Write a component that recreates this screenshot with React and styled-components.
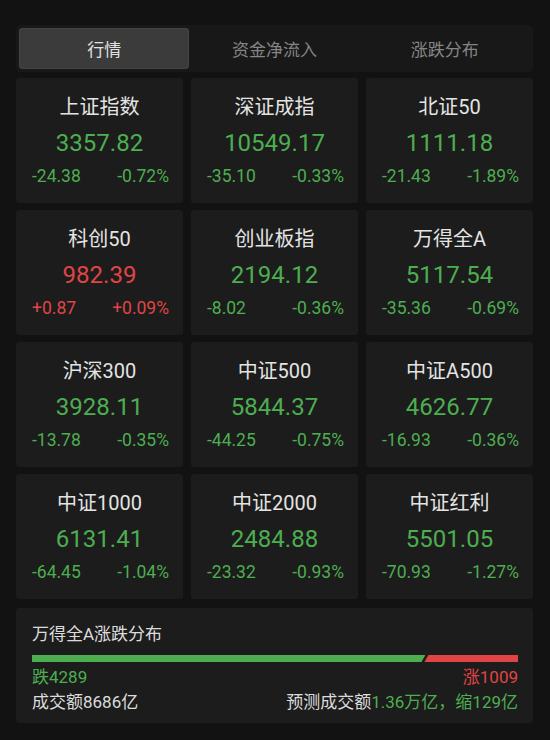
import React from 'react';
import styled, { createGlobalStyle } from 'styled-components';

const GREEN = '#4cae50';
const RED = '#e04545';

const GlobalStyle = createGlobalStyle`
    html, body {
        margin: 0;
        padding: 0;
        background-color: #121212;
    }
    body {
        font-family: Roboto, "Noto Sans CJK SC", sans-serif;
        -webkit-font-smoothing: antialiased;
    }
`;

const Page = styled.div`
    width: 550px;
    min-height: 740px;
    box-sizing: border-box;
    padding: 25px 17px 0 16px;
    background-color: #121212;
`;

const TabBar = styled.div`
    display: grid;
    grid-template-columns: repeat(3, 1fr);
    padding: 3px;
    height: 47px;
    box-sizing: border-box;
    background-color: #181818;
    border-radius: 5px;
`;

const Tab = styled.div`
    display: flex;
    align-items: center;
    justify-content: center;
    font-size: 17px;
    border-radius: 4px;
    color: ${({ $active }) => ($active ? '#e2e2e2' : '#858585')};
    background-color: ${({ $active }) => ($active ? '#3b3b3b' : 'transparent')};
    box-shadow: ${({ $active }) => ($active ? 'inset 0 0 0 1px #444' : 'none')};
`;

const Grid = styled.div`
    display: grid;
    grid-template-columns: repeat(3, 1fr);
    column-gap: 8px;
    row-gap: 7px;
    margin-top: 6px;
`;

const Card = styled.div`
    height: 125px;
    box-sizing: border-box;
    padding-top: 16px;
    display: flex;
    flex-direction: column;
    align-items: stretch;
    background-color: #1c1c1c;
    border-radius: 3px;
`;

const Name = styled.div`
    text-align: center;
    font-size: 20px;
    line-height: 26px;
    color: #e4e4e4;
`;

const Price = styled.div`
    text-align: center;
    font-size: 24px;
    line-height: 30px;
    margin-top: 8px;
    color: ${({ $up }) => ($up ? RED : GREEN)};
`;

const Changes = styled.div`
    display: flex;
    justify-content: space-between;
    padding: 0 14px 0 16px;
    margin-top: 7px;
    font-size: 17.5px;
    line-height: 22px;
    color: ${({ $up }) => ($up ? RED : GREEN)};
`;

const Panel = styled.div`
    margin-top: 9px;
    padding: 16px 15px 10px 16px;
    background-color: #1c1c1c;
    border-radius: 3px;
`;

const PanelTitle = styled.div`
    font-size: 17px;
    line-height: 20px;
    color: #dcdcdc;
`;

const Bar = styled.div`
    display: flex;
    height: 7px;
    margin-top: 11px;
`;

const BarPart = styled.div`
    height: 100%;
    background-color: ${({ $up }) => ($up ? RED : GREEN)};
    clip-path: ${({ $up }) =>
        $up
            ? 'polygon(4px 0, 100% 0, 100% 100%, 0 100%)'
            : 'polygon(0 0, 100% 0, calc(100% - 4px) 100%, 0 100%)'};
`;

const Row = styled.div`
    display: flex;
    justify-content: space-between;
    font-size: 17px;
    line-height: ${({ $lh }) => $lh}px;
    margin-top: ${({ $mt }) => $mt}px;
    color: #dcdcdc;
`;

const Colored = styled.span`
    color: ${({ $up }) => ($up ? RED : GREEN)};
`;

const indices = [
    { name: '上证指数', price: '3357.82', chg: '-24.38', pct: '-0.72%' },
    { name: '深证成指', price: '10549.17', chg: '-35.10', pct: '-0.33%' },
    { name: '北证50', price: '1111.18', chg: '-21.43', pct: '-1.89%' },
    { name: '科创50', price: '982.39', chg: '+0.87', pct: '+0.09%', up: true },
    { name: '创业板指', price: '2194.12', chg: '-8.02', pct: '-0.36%' },
    { name: '万得全A', price: '5117.54', chg: '-35.36', pct: '-0.69%' },
    { name: '沪深300', price: '3928.11', chg: '-13.78', pct: '-0.35%' },
    { name: '中证500', price: '5844.37', chg: '-44.25', pct: '-0.75%' },
    { name: '中证A500', price: '4626.77', chg: '-16.93', pct: '-0.36%' },
    { name: '中证1000', price: '6131.41', chg: '-64.45', pct: '-1.04%' },
    { name: '中证2000', price: '2484.88', chg: '-23.32', pct: '-0.93%' },
    { name: '中证红利', price: '5501.05', chg: '-70.93', pct: '-1.27%' },
];

const tabs = ['行情', '资金净流入', '涨跌分布'];

const down = 4289;
const upCount = 1009;

const App = () => {
    const downShare = (down / (down + upCount)) * 100;

    return (
        <Page>
            <GlobalStyle />
            <TabBar>
                {tabs.map((t, i) => (
                    <Tab key={t} $active={i === 0}>
                        {t}
                    </Tab>
                ))}
            </TabBar>
            <Grid>
                {indices.map((item) => (
                    <Card key={item.name}>
                        <Name>{item.name}</Name>
                        <Price $up={item.up}>{item.price}</Price>
                        <Changes $up={item.up}>
                            <span>{item.chg}</span>
                            <span>{item.pct}</span>
                        </Changes>
                    </Card>
                ))}
            </Grid>
            <Panel>
                <PanelTitle>万得全A涨跌分布</PanelTitle>
                <Bar>
                    <BarPart style={{ width: `${downShare}%` }} />
                    <BarPart $up style={{ flex: 1, marginLeft: '-1px' }} />
                </Bar>
                <Row $lh={20} $mt={5}>
                    <Colored>跌{down}</Colored>
                    <Colored $up>涨{upCount}</Colored>
                </Row>
                <Row $lh={22} $mt={4}>
                    <span>成交额8686亿</span>
                    <span>
                        预测成交额<Colored>1.36万亿，缩129亿</Colored>
                    </span>
                </Row>
            </Panel>
        </Page>
    );
};

export default App;
